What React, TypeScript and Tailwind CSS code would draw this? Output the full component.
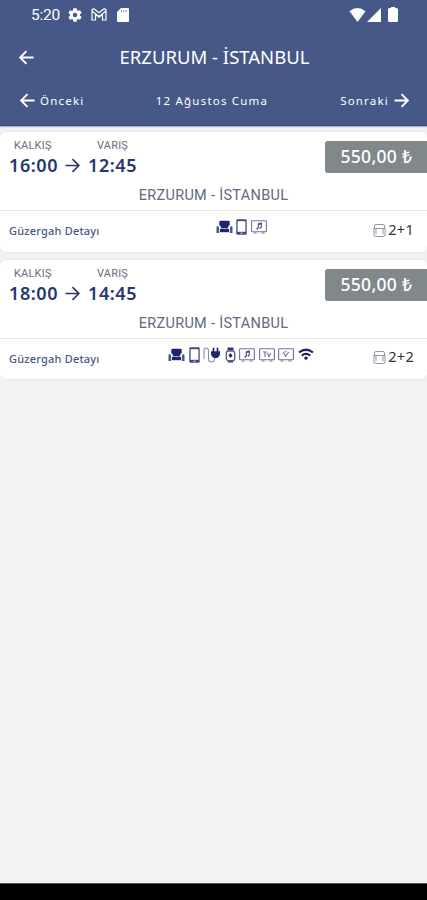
import type { ReactNode } from "react";

type Service = "seat" | "phone" | "plug" | "watch" | "music" | "tv" | "video" | "wifi";

interface Trip {
    departure: string;
    arrival: string;
    price: string;
    layout: string;
    services: Service[];
}

const trips: Trip[] = [
    {
        departure: "16:00",
        arrival: "12:45",
        price: "550,00 ₺",
        layout: "2+1",
        services: ["seat", "phone", "music"],
    },
    {
        departure: "18:00",
        arrival: "14:45",
        price: "550,00 ₺",
        layout: "2+2",
        services: ["seat", "phone", "plug", "watch", "music", "tv", "video", "wifi"],
    },
];

function Arrow({ left, className }: { left?: boolean; className: string }) {
    return (
        <svg viewBox="0 0 16 16" className={className} fill="none" stroke="currentColor">
            {left ? <path d="M15.5 8H1.5M8 1.2L1.2 8L8 14.8" /> : <path d="M0.5 8h14M8 1.2L14.8 8L8 14.8" />}
        </svg>
    );
}

function Screen({ children }: { children: ReactNode }) {
    return (
        <svg viewBox="0 0 16 14" className="w-4 h-3.5" fill="none" stroke="#70759a" strokeWidth="1.1">
            <rect x="0.6" y="0.8" width="14.8" height="11" rx="0.8" />
            <path d="M2.5 13h3M10.5 13h3" />
            {children}
        </svg>
    );
}

function ServiceIcon({ name }: { name: Service }) {
    switch (name) {
        case "seat":
            return (
                <svg viewBox="0 0 17 14" className="w-[17px] h-3.5" fill="#1d2766">
                    <path d="M4.6 0.8h7.8q1.3 0 1.3 1.3v3.2q-1.6.3-1.6 2v1H4.9v-1q0-1.7-1.6-2V2.1q0-1.3 1.3-1.3z" />
                    <path d="M4 8.8h9v3.4h-9z" />
                    <path d="M0.5 7.2q0-1 1.2-1t1.4 1.2V13H0.5zM16.5 7.2q0-1-1.2-1t-1.4 1.2V13h2.6z" fill="#4b5588" />
                </svg>
            );
        case "phone":
            return (
                <svg viewBox="0 0 11 16" className="w-[11px] h-4">
                    <rect x="0.3" y="0.3" width="10.4" height="15.4" rx="1.3" fill="#41497c" />
                    <path d="M1.6 2.2h7.8v10.6H1.6z" fill="#fff" />
                    <path d="M4.5 14.2h2" stroke="#fff" strokeWidth="0.9" />
                </svg>
            );
        case "plug":
            return (
                <svg viewBox="0 0 18 16" className="w-[18px] h-4" fill="none">
                    <path d="M1 12V3.5Q1 1 3.2 1T5.5 3.5V12q0 3 3 3t3.3-4" stroke="#8c8fa9" strokeWidth="1.1" />
                    <path d="M8 4.2h9v1.6q0 4.4-3.2 5.2h-2.6Q8 10.2 8 5.8z" fill="#1d2766" />
                    <path d="M10.5 0.8v4M14.5 0.8v4" stroke="#1d2766" strokeWidth="1.7" />
                </svg>
            );
        case "watch":
            return (
                <svg viewBox="0 0 11 16" className="w-[11px] h-4" fill="none">
                    <path d="M2.5 0.5h6v3h-6zM3 13.3h5v2.2H3z" fill="#31396f" />
                    <rect x="1.3" y="4" width="8.4" height="9.6" rx="2.2" stroke="#5c6390" strokeWidth="1.4" />
                    <path d="M5.5 6l2 2.5-2 2.5-2-2.5z" fill="#1d2766" />
                </svg>
            );
        case "music":
            return (
                <Screen>
                    <path d="M7.3 8.2V3.8L10.3 3v4.5M7.3 4.5l3-.8" stroke="#444b7a" />
                    <path d="M5.5 8.6h1.5M8.6 7.8h1.5" stroke="#444b7a" strokeWidth="1.6" />
                </Screen>
            );
        case "tv":
            return (
                <Screen>
                    <path d="M4 4h4M6 4v5M8.5 5l1.5 3.7L11.7 5" />
                </Screen>
            );
        case "video":
            return (
                <Screen>
                    <path d="M5.2 4l2.3 4.2L10.8 4M6.5 3.7h2" />
                </Screen>
            );
        case "wifi":
            return (
                <svg viewBox="0 0 16 13" className="w-4 h-[13px]" fill="none" stroke="#1d2766" strokeWidth="2.2">
                    <path d="M1 4.5Q8-1 15 4.5M3.7 7.6Q8 4.2 12.3 7.6" />
                    <path d="M8 8.2l2.3 1.7L8 12.3 5.7 9.9z" fill="#1d2766" stroke="none" />
                </svg>
            );
    }
}

function StatusBar() {
    return (
        <div className="flex h-[30px] items-center pb-px pl-[31px] pr-[29px] text-white">
            <span className="w-[37px] pt-[3px] font-[Roboto] text-[15.5px] leading-none tracking-[-0.2px] whitespace-nowrap">5:20</span>
            <svg viewBox="2 2 20 20" className="h-[14px] w-[14px]" fill="currentColor">
                <path
                    fillRule="evenodd"
                    d="M19.14 12.94c.04-.3.06-.61.06-.94s-.02-.64-.07-.94l2.03-1.58a.5.5 0 0 0 .12-.61l-1.92-3.32a.49.49 0 0 0-.59-.22l-2.39.96a7 7 0 0 0-1.62-.94l-.36-2.54a.48.48 0 0 0-.48-.41h-3.84a.48.48 0 0 0-.47.41l-.36 2.54c-.59.24-1.13.57-1.62.94l-2.39-.96a.48.48 0 0 0-.59.22L2.74 8.87a.47.47 0 0 0 .12.61l2.03 1.58a6 6 0 0 0-.02 1.88l-2.03 1.58a.5.5 0 0 0-.12.61l1.92 3.32c.12.22.37.29.59.22l2.39-.96c.5.38 1.03.7 1.62.94l.36 2.54c.05.24.24.41.48.41h3.84c.24 0 .44-.17.47-.41l.36-2.54a7 7 0 0 0 1.62-.94l2.39.96c.22.08.47 0 .59-.22l1.92-3.32a.48.48 0 0 0-.12-.61zM12 15.2a3.2 3.2 0 1 1 0-6.4 3.2 3.2 0 0 1 0 6.4z"
                />
            </svg>
            <svg viewBox="0 0 16 13" className="ml-[9px] h-[13px] w-4" fill="none" stroke="currentColor" strokeWidth="1.2">
                <path d="M1 12V2q1-2 3-.5l4 3.3 4-3.3q2-1.5 3 .5v10h-3.5V6.5L8 9.2 4.5 6.5V12zM1 3l7 5.5L15 3" />
            </svg>
            <svg viewBox="0 0 12 14" className="ml-[10px] h-[14px] w-3" fill="currentColor">
                <path d="M4 0h7q1 0 1 1v12q0 1-1 1H1q-1 0-1-1V4z" />
                <path d="M4.5 2v2.2M6.8 2v2.2M9.1 2v2.2" stroke="#8b97b6" strokeWidth="1" />
            </svg>
            <svg viewBox="0 0 17 14" className="ml-auto h-[14px] w-[17px]" fill="currentColor">
                <path d="M0.5 3.3Q8.5-3.3 16.5 3.3L8.5 14z" />
            </svg>
            <svg viewBox="0 0 14 14" className="ml-px h-[14px] w-[14px]" fill="currentColor">
                <path d="M14 0v14H0z" />
            </svg>
            <svg viewBox="0 0 10 15" className="ml-[7px] h-[15px] w-[10px]" fill="currentColor">
                <path d="M3 0h4v1h1.5q1.5 0 1.5 1.5V13.5q0 1.5-1.5 1.5h-7Q0 15 0 13.5V2.5q0-1.5 1.5-1.5H3z" />
            </svg>
        </div>
    );
}

function TripCard({ trip }: { trip: Trip }) {
    return (
        <div className="h-[119.5px] rounded-md bg-white shadow-[0_0_2px_rgba(0,0,0,0.12)]">
            <div className="flex h-[79px] flex-col border-b border-[#e8e8ea]">
                <div className="flex h-[49px] justify-between pt-[9px]">
                    <div className="grid h-[38px] grid-cols-[56px_23px_60px] content-start pl-[9px]">
                        <span className="pl-[5px] font-[Roboto] text-[11px] leading-[9px] tracking-[0.2px] text-[#686c80]">KALKIŞ</span>
                        <span />
                        <span className="pl-[9px] font-[Roboto] text-[11px] leading-[9px] tracking-[0.2px] text-[#686c80]">VARIŞ</span>
                        <span className="pt-[4px] font-['Noto_Sans'] text-[18px] leading-[23px] font-semibold tracking-[0.6px] text-[#28376f]">{trip.departure}</span>
                        <Arrow className="mt-[8px] h-[15px] w-[15px] stroke-[1.7] text-[#28376f]" />
                        <span className="pt-[4px] font-['Noto_Sans'] text-[18px] leading-[23px] font-semibold tracking-[0.6px] text-[#28376f]">{trip.arrival}</span>
                    </div>
                    <div className="h-8 w-[102px] rounded-l-[3px] bg-[#80888b] pl-[15.5px] font-['Noto_Sans'] text-[17.5px] leading-[30px] font-medium tracking-[0.3px] whitespace-nowrap text-white">
                        {trip.price}
                    </div>
                </div>
                <div className="pt-[5px] text-center font-[Roboto] text-[14.5px] leading-[20px] tracking-[0.3px] text-[#65687f]">
                    ERZURUM - İSTANBUL
                </div>
            </div>
            <div className="flex h-[40px] pt-[7px]">
                <span className="w-[130px] pt-[3px] pl-[9px] font-['Noto_Sans'] text-[11px] leading-[19px] font-medium tracking-[0.2px] text-[#4c5680]">
                    Güzergah Detayı
                </span>
                <div className="flex h-[18px] flex-1 items-center justify-center gap-[3.5px] pl-[5px]">
                    {trip.services.map((s) => (
                        <ServiceIcon key={s} name={s} />
                    ))}
                </div>
                <div className="flex h-[22px] w-[80px] items-center justify-end gap-[2px] pr-[13px]">
                    <svg viewBox="0 0 13 13" className="mt-[2px] h-[13px] w-[13px]" fill="none" stroke="#9496a6">
                        <path d="M1.5 4.5V2q0-1.5 1.5-1.5h7q1.5 0 1.5 1.5v2.5M3 4.5v6M10 4.5v6M0.5 4.5h12M1 4.5v6.5q0 1.5 1.5 1.5h8q1.5 0 1.5-1.5V4.5" />
                    </svg>
                    <span className="font-['Noto_Sans'] text-[14.5px] leading-[19px] tracking-[0.3px] text-[#333]">{trip.layout}</span>
                </div>
            </div>
        </div>
    );
}

export default function App() {
    return (
        <div className="flex h-[900px] w-[427px] flex-col overflow-hidden bg-[#f2f2f2]">
            <header className="h-[125.5px] shrink-0 border-b border-[#344680] bg-[#465887] text-white shadow-[0_1px_1px_rgba(70,88,135,0.4)]">
                <StatusBar />
                <div className="grid h-[54px] grid-cols-[101px_1fr_99px] items-center">
                    <Arrow left className="ml-[19px] h-[15px] w-[15px] stroke-[2]" />
                    <h1 className="text-center font-['Noto_Sans'] text-[18.5px] leading-none whitespace-nowrap">ERZURUM - İSTANBUL</h1>
                </div>
                <div className="grid h-8 grid-cols-3 items-center font-['Noto_Sans'] text-[11.5px] leading-none tracking-[1.2px]">
                    <div className="flex items-center gap-[5px] pl-[20px]">
                        <Arrow left className="h-[15px] w-[15px] stroke-[2]" />
                        <span className="pt-px">Önceki</span>
                    </div>
                    <span className="pt-px pr-[3px] text-center whitespace-nowrap">12 Ağustos Cuma</span>
                    <div className="flex items-center justify-end gap-[5px] pr-[18px]">
                        <span className="pt-px">Sonraki</span>
                        <Arrow className="h-[15px] w-[15px] stroke-[2]" />
                    </div>
                </div>
            </header>
            <main className="flex flex-1 flex-col gap-2 pt-[6.5px]">
                {trips.map((trip) => (
                    <TripCard key={trip.departure} trip={trip} />
                ))}
            </main>
            <footer className="h-[17.5px] shrink-0 border-t border-[#555] bg-black" />
        </div>
    );
}
